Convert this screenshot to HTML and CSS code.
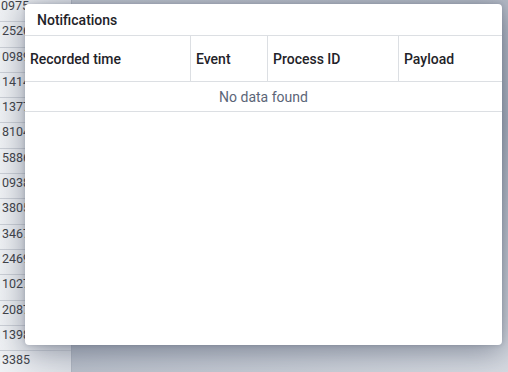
FILE: index.html
```html
<!DOCTYPE html>
<html>
<head>
<meta charset="utf-8">
<link rel="stylesheet" href="styles.css">
</head>
<body>
<div class="page">
  <div class="idcol">
    <div class="idcell"><span>0975</span></div>
    <div class="idcell"><span>12526</span></div>
    <div class="idcell"><span>10989</span></div>
    <div class="idcell"><span>11414</span></div>
    <div class="idcell"><span>11377</span></div>
    <div class="idcell"><span>18104</span></div>
    <div class="idcell"><span>15886</span></div>
    <div class="idcell"><span>10938</span></div>
    <div class="idcell"><span>13805</span></div>
    <div class="idcell"><span>13467</span></div>
    <div class="idcell"><span>12469</span></div>
    <div class="idcell"><span>11027</span></div>
    <div class="idcell"><span>12087</span></div>
    <div class="idcell"><span>11398</span></div>
    <div class="idcell"><span>13385</span></div>
  </div>
  <div class="rest"></div>
</div>

<div class="modal">
  <div class="modal-title">Notifications</div>
  <div class="table">
    <div class="thead">
      <div class="th c1">Recorded time</div>
      <div class="th c2">Event</div>
      <div class="th c3">Process ID</div>
      <div class="th c4">Payload</div>
    </div>
    <div class="empty">No data found</div>
  </div>
</div>
</body>
</html>
```

FILE: styles.css
```css
html, body {
  margin: 0;
  padding: 0;
  height: 100%;
  overflow: hidden;
}
body {
  font-family: Roboto, "Liberation Sans", sans-serif;
  background: #c4c9d3;
  position: relative;
}
.page {
  display: flex;
  height: 100%;
  background: linear-gradient(160deg, #c3c8d1 0%, #aab1be 55%, #d6dae1 100%);
}
.idcol {
  width: 71px;
  flex: none;
  margin-top: -3px;
  background: linear-gradient(90deg, #eff1f4 0%, #dde0e6 100%);
  border-right: 1px solid #b0b6c1;
}
.idcell {
  height: 25.3px;
  box-sizing: border-box;
  border-bottom: 1px solid #cbcfd6;
  overflow: hidden;
  white-space: nowrap;
  font-size: 12.5px;
  line-height: 14px;
  padding-top: 2px;
  color: #414349;
}
.idcell span {
  display: inline-block;
  margin-left: -5px;
}
.idcell:first-child span {
  margin-left: 1px;
}
.rest {
  flex: 1;
}
.modal {
  position: absolute;
  left: 25px;
  top: 4px;
  width: 477px;
  height: 341px;
  background: #fff;
  border-radius: 4px;
  box-shadow: 0 6px 30px rgba(40, 50, 75, 0.45), 0 0 4px rgba(40, 50, 75, 0.2);
  overflow: hidden;
}
.modal-title {
  height: 32px;
  box-sizing: border-box;
  border-bottom: 1px solid #dcdfe3;
  padding-left: 12px;
  display: flex;
  align-items: center;
  font-size: 14px;
  font-weight: 500;
  color: #1f2329;
}
.thead {
  display: grid;
  grid-template-columns: 166px 77px 131px 1fr;
  height: 46px;
  box-sizing: border-box;
  border-bottom: 1px solid #dcdfe3;
}
.th {
  display: flex;
  align-items: center;
  padding-left: 5px;
  font-size: 14px;
  font-weight: 500;
  color: #1f2329;
  border-right: 1px solid #dcdfe3;
}
.th.c4 {
  border-right: none;
}
.empty {
  height: 30px;
  box-sizing: border-box;
  border-bottom: 1px solid #dcdfe3;
  display: flex;
  align-items: center;
  justify-content: center;
  font-size: 14px;
  color: #5b6578;
}
```
